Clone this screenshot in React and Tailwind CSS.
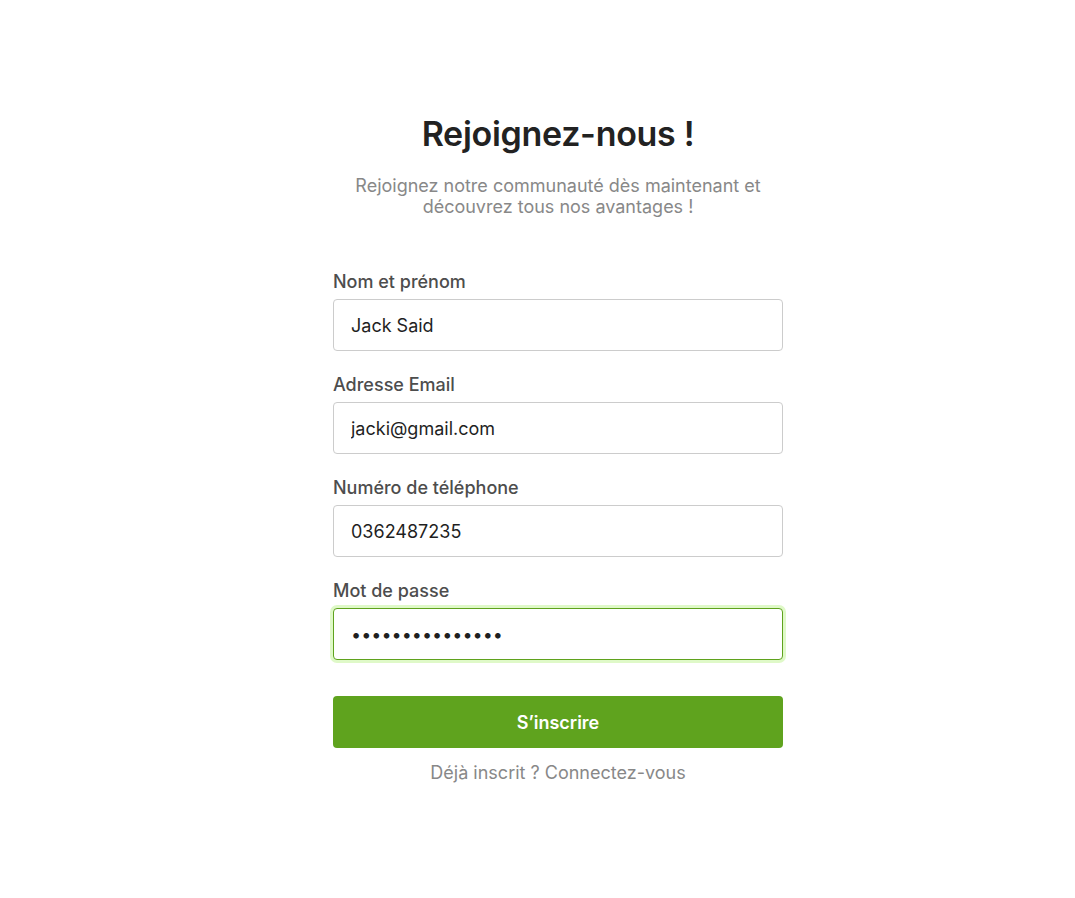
import { useState } from "react";

export default function App() {
  const [name, setName] = useState("Jack Said");
  const [email, setEmail] = useState("jacki@gmail.com");
  const [phone, setPhone] = useState("0362487235");
  const [password, setPassword] = useState("motdepasse12345");

  const labelClass = "block mb-[5px] text-[18px] leading-[24px] font-medium text-[#4d4d4d]";
  const inputClass =
    "w-full h-[52px] px-[17px] rounded-[4px] border border-[#cccccc] bg-white text-[18px] text-[#1f1f1f] outline-none";

  return (
    <div
      className="min-h-screen bg-white flex justify-center pl-[41px] pt-[111px]"
      style={{ fontFamily: "Inter, 'Noto Sans', sans-serif" }}
    >
      <div className="w-[450px] flex flex-col">
        <h1 className="text-center text-[34px] leading-[46px] font-semibold text-[#222222] tracking-[-0.3px]">
          Rejoignez-nous !
        </h1>
        <p className="mx-auto mt-[18px] w-[430px] text-center text-[18px] leading-[21px] text-[#888888]">
          Rejoignez notre communauté dès maintenant et découvrez tous nos avantages !
        </p>

        <form className="mt-[53px] flex flex-col gap-[22px]" onSubmit={(e) => e.preventDefault()}>
          <div>
            <label className={labelClass}>Nom et prénom</label>
            <input className={inputClass} value={name} onChange={(e) => setName(e.target.value)} />
          </div>
          <div>
            <label className={labelClass}>Adresse Email</label>
            <input className={inputClass} value={email} onChange={(e) => setEmail(e.target.value)} />
          </div>
          <div>
            <label className={labelClass}>Numéro de téléphone</label>
            <input className={inputClass} value={phone} onChange={(e) => setPhone(e.target.value)} />
          </div>
          <div>
            <label className={labelClass}>Mot de passe</label>
            <input
              type="password"
              autoFocus
              className="w-full h-[52px] px-[17px] rounded-[4px] border border-[#5fa21d] bg-white text-[18px] text-[#1f1f1f] outline-none shadow-[0_0_0_3px_#dff9c8]"
              value={password}
              onChange={(e) => setPassword(e.target.value)}
            />
          </div>

          <button
            type="submit"
            className="mt-[14px] h-[52px] w-full rounded-[4px] bg-[#5fa31e] text-white text-[18px] font-semibold"
          >
            S’inscrire
          </button>
        </form>

        <p className="mt-[13px] text-center text-[18px] leading-[24px] text-[#888888]">
          Déjà inscrit ? Connectez-vous
        </p>
      </div>
    </div>
  );
}
